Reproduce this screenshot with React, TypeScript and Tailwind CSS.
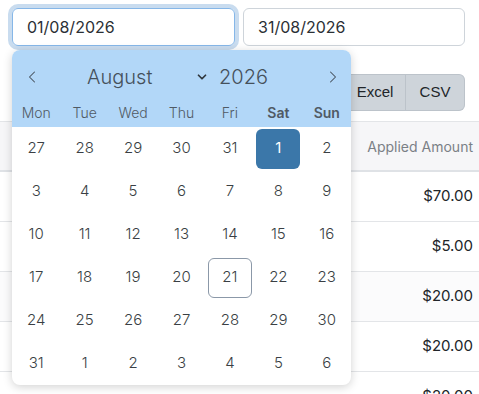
import { ChevronLeft, ChevronRight, ChevronDown } from 'lucide-react';

const weekdays = ['Mon', 'Tue', 'Wed', 'Thu', 'Fri', 'Sat', 'Sun'];

const days = [
  [27, 28, 29, 30, 31, 1, 2],
  [3, 4, 5, 6, 7, 8, 9],
  [10, 11, 12, 13, 14, 15, 16],
  [17, 18, 19, 20, 21, 22, 23],
  [24, 25, 26, 27, 28, 29, 30],
  [31, 1, 2, 3, 4, 5, 6],
];

const amounts = ['$70.00', '$5.00', '$20.00', '$20.00', '$20.00'];

const Calendar = () => {
  return (
    <div className="absolute left-3 top-[50px] w-[339px] rounded-lg bg-white shadow-[0_2px_10px_rgba(0,0,0,0.18)] overflow-hidden font-['Inter',sans-serif]">
      <div className="bg-[#b2d7f8] text-[#45505b]">
        <div className="flex items-center h-[52px] pt-[2px]">
          <ChevronLeft className="ml-[10px] w-[20px] h-[20px]" strokeWidth={1.25} />
          <div className="flex items-center ml-[45px]">
            <span className="text-[20px] font-light w-[108px]">August</span>
            <ChevronDown className="w-[14px] h-[14px] text-[#30373e]" strokeWidth={3} />
            <span className="text-[20px] font-light ml-[10px]">2026</span>
          </div>
          <ChevronRight className="ml-auto mr-[8px] w-[20px] h-[20px]" strokeWidth={1.25} />
        </div>
        <div className="grid grid-cols-7 h-[25px] items-start text-[14px] text-[#505a64]">
          {weekdays.map((d, i) => (
            <div key={d} className={`text-center ${i >= 5 ? 'font-semibold' : 'font-light'}`}>
              {d}
            </div>
          ))}
        </div>
      </div>
      <div className="text-[15px] font-light text-[#3a3f44]">
        {days.map((row, r) => (
          <div key={r} className="grid grid-cols-7 h-[43px]">
            {row.map((d, c) => {
              const selected = r === 0 && d === 1;
              const today = r === 3 && d === 21;
              return (
                <div key={c} className="flex items-center justify-center">
                  <div
                    className={`flex items-center justify-center w-[44px] h-[40px] rounded-md ${
                      selected ? 'bg-[#3b77a9] text-white font-normal' : ''
                    } ${today ? 'border border-[#8b98a8]' : ''}`}
                  >
                    {d}
                  </div>
                </div>
              );
            })}
          </div>
        ))}
      </div>
    </div>
  );
};

export default function App() {
  return (
    <div className="relative w-[479px] h-[394px] overflow-hidden bg-white font-['Inter',sans-serif]">
      <div className="flex gap-2 pl-3 pr-[14px] pt-2">
        <div className="w-[223px] h-[38px] rounded-md border border-[#86b7e8] ring-4 ring-[#c9dcef] flex items-center pl-[14px] text-[16px] text-[#2b3035]">
          01/08/2026
        </div>
        <div className="flex-1 h-[38px] rounded-md border border-[#ced4da] flex items-center pl-[14px] text-[16px] text-[#2b3035]">
          31/08/2026
        </div>
      </div>

      <div className="flex justify-end pr-[14px] mt-[28px]">
        <div className="flex h-[37px] text-[15px] text-[#212529] font-['Liberation_Sans',sans-serif]">
          <div className="w-[62px] flex items-center justify-center bg-[#ced4da] border border-[#bcc3ca]">Excel</div>
          <div className="w-[59px] flex items-center justify-center bg-[#ced4da] border border-l-0 border-[#bcc3ca] rounded-r-md">
            CSV
          </div>
        </div>
      </div>

      <div className="mt-[10px] border-t border-[#e3e5e8]">
        <div className="h-[50px] bg-[#f6f6f8] border-b-2 border-[#dfe2e6] flex items-center justify-end pr-[6px] text-[14px] text-[#7b8086]">
          Applied Amount
        </div>
        {amounts.map((a, i) => (
          <div
            key={i}
            className={`h-[50px] border-b border-[#e3e5e8] flex items-center justify-end pr-[6px] text-[15px] text-[#212529] ${
              i === 2 ? 'bg-[#fbfbfc]' : ''
            }`}
          >
            {a}
          </div>
        ))}
      </div>

      <Calendar />
    </div>
  );
}
